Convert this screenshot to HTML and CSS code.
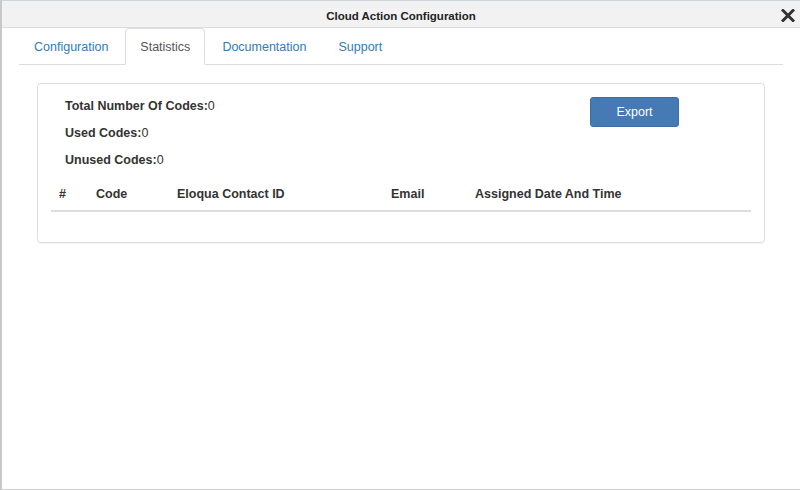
FILE: index.html
```html
<!DOCTYPE html>
<html>
<head>
<meta charset="utf-8">
<title>Cloud Action Configuration</title>
<link rel="stylesheet" href="styles.css">
</head>
<body>
<div class="window">
  <div class="titlebar">
    <span class="title">Cloud Action Configuration</span>
    <span class="close" aria-label="Close">
      <svg width="14" height="13" viewBox="0 0 14 13"><path d="M2 1.5 L12 11.5 M12 1.5 L2 11.5" stroke="#333" stroke-width="3" stroke-linecap="square"/></svg>
    </span>
  </div>
  <div class="body">
    <ul class="tabs">
      <li class="tab"><a>Configuration</a></li>
      <li class="tab active"><a>Statistics</a></li>
      <li class="tab"><a>Documentation</a></li>
      <li class="tab"><a>Support</a></li>
    </ul>
    <div class="panel">
      <div class="top">
        <div class="stats">
          <div><b>Total Number Of Codes:</b>0</div>
          <div><b>Used Codes:</b>0</div>
          <div><b>Unused Codes:</b>0</div>
        </div>
        <button class="btn">Export</button>
      </div>
      <div class="thead">
        <div>#</div>
        <div>Code</div>
        <div>Eloqua Contact ID</div>
        <div>Email</div>
        <div>Assigned Date And Time</div>
      </div>
    </div>
  </div>
</div>
</body>
</html>
```
FILE: styles.css
```css
html, body {
  margin: 0;
  padding: 0;
  background: #fff;
}
.window {
  box-sizing: border-box;
  width: 800px;
  height: 490px;
  border-left: 2px solid #c8c8c8;
  border-top: 1px solid #cdd5df;
  border-bottom: 1px solid #cfcfcf;
  font-family: "Liberation Sans", Arial, sans-serif;
  color: #333;
}
.titlebar {
  position: relative;
  box-sizing: border-box;
  height: 27px;
  padding-top: 3px;
  background: #f2f2f2;
  border-bottom: 1px solid #dcdcdc;
  display: flex;
  align-items: center;
  justify-content: center;
}
.title {
  font-size: 11.5px;
  font-weight: bold;
  color: #222;
}
.close {
  position: absolute;
  right: 5px;
  top: 8px;
  width: 14px;
  height: 13px;
  display: block;
}
.close svg { display: block; }
.body {
  padding: 0 17px 0 17px;
}
.tabs {
  list-style: none;
  margin: 0;
  padding: 0;
  display: flex;
  height: 36px;
  border-bottom: 1px solid #dddddd;
}
.tab {
  margin-right: 2px;
  margin-bottom: -1px;
}
.tab a {
  display: block;
  box-sizing: border-box;
  height: 37px;
  line-height: 37px;
  padding: 0 14px;
  font-size: 12.5px;
  color: #337ab7;
  border: 1px solid transparent;
  border-radius: 4px 4px 0 0;
}
.tab.active a {
  color: #555;
  background: #fff;
  border-color: #dddddd;
  border-bottom-color: #fff;
}
.panel {
  margin: 18px 18px 0 18px;
  border: 1px solid #dddddd;
  border-radius: 4px;
  padding: 9px 13px 30px 13px;
  box-shadow: 0 1px 1px rgba(0,0,0,0.04);
}
.top {
  display: flex;
  justify-content: space-between;
  align-items: flex-start;
}
.stats {
  padding-left: 14px;
  font-size: 12.5px;
  line-height: 27px;
}
.stats b { font-weight: bold; }
.btn {
  margin-top: 4px;
  margin-right: 72px;
  width: 89px;
  height: 30px;
  background: #457ab5;
  border: 1px solid #3c6ea6;
  border-radius: 3px;
  color: #fff;
  font-family: "Liberation Sans", Arial, sans-serif;
  font-size: 12.5px;
  padding: 0;
}
.thead {
  display: grid;
  grid-template-columns: 37px 81px 214px 84px 1fr;
  padding: 11px 0 7px 0;
  border-bottom: 2px solid #dddddd;
  font-size: 12.5px;
  font-weight: bold;
  line-height: 18px;
}
.thead div {
  padding-left: 8px;
}
```
